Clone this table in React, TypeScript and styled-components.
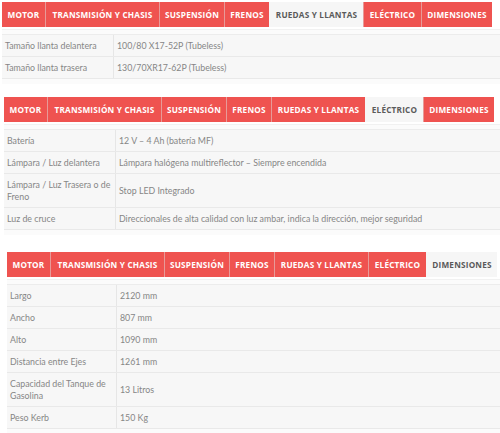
import React from "react";
import styled, { createGlobalStyle } from "styled-components";

const Global = createGlobalStyle`
  html, body { margin: 0; padding: 0; background: #ffffff; overflow: hidden; }
  body { width: 500px; height: 433px; }
`;

const TABS: { label: string; width: number }[] = [
  { label: "MOTOR", width: 43 },
  { label: "TRANSMISIÓN Y CHASIS", width: 114 },
  { label: "SUSPENSIÓN", width: 65 },
  { label: "FRENOS", width: 45 },
  { label: "RUEDAS Y LLANTAS", width: 94 },
  { label: "ELÉCTRICO", width: 58 },
  { label: "DIMENSIONES", width: 71 },
];

type Row = [string, string];

interface SectionData {
  active: number;
  left: number;
  top: number;
  col: number;
  rows: Row[];
}

const SECTIONS: SectionData[] = [
  {
    active: 4,
    left: 2,
    top: 2,
    col: 111,
    rows: [
      ["Tamaño llanta delantera", "100/80 X17-52P (Tubeless)"],
      ["Tamaño llanta trasera", "130/70XR17-62P (Tubeless)"],
    ],
  },
  {
    active: 5,
    left: 4,
    top: 13,
    col: 111,
    rows: [
      ["Batería", "12 V – 4 Ah (batería MF)"],
      ["Lámpara / Luz delantera", "Lámpara halógena multireflector – Siempre encendida"],
      ["Lámpara / Luz Trasera o de Freno", "Stop LED Integrado"],
      ["Luz de cruce", "Direccionales de alta calidad con luz ambar, indica la dirección, mejor seguridad"],
    ],
  },
  {
    active: 6,
    left: 7,
    top: 17,
    col: 109,
    rows: [
      ["Largo", "2120 mm"],
      ["Ancho", "807 mm"],
      ["Alto", "1090 mm"],
      ["Distancia entre Ejes", "1261 mm"],
      ["Capacidad del Tanque de Gasolina", "13 Litros"],
      ["Peso Kerb", "150 Kg"],
    ],
  },
];

const Page = styled.div`
  display: flex;
  flex-direction: column;
  width: 500px;
`;

const Section = styled.section<{ $left: number; $top: number }>`
  display: flex;
  flex-direction: column;
  margin-left: ${(p) => p.$left}px;
  margin-top: ${(p) => p.$top}px;
  width: 540px;
`;

const TabBar = styled.div`
  display: flex;
  height: 25px;
`;

const Tab = styled.div<{ $active: boolean; $w: number }>`
  display: flex;
  align-items: center;
  justify-content: center;
  box-sizing: border-box;
  width: ${(p) => p.$w}px;
  flex: none;
  font-family: "Open Sans", sans-serif;
  font-weight: 700;
  font-size: 8.2px;
  letter-spacing: 0.2px;
  white-space: nowrap;
  color: ${(p) => (p.$active ? "#5a5a5a" : "#ffffff")};
  background: ${(p) => (p.$active ? "#f6f6f6" : "#ef5350")};
  border-left: 1px solid ${(p) => (p.$active ? "#f6f6f6" : "#e79a98")};
  &:first-child { border-left: none; }
`;

const Panel = styled.div`
  margin-top: 2px;
  background: #fbfbfb;
  border-top: 1px solid #f1f1f1;
  padding: 4px 0 5px;
`;

const Table = styled.div`
  display: flex;
  flex-direction: column;
  background: #f7f7f7;
  border-top: 1px solid #ececec;
`;

const TRow = styled.div<{ $col: number }>`
  display: grid;
  grid-template-columns: ${(p) => p.$col}px 1fr;
  border-bottom: 1px solid #e9e9e9;
  min-height: 21px;
`;

const Cell = styled.div`
  display: flex;
  align-items: center;
  padding: 4.5px 3px;
  font-family: "Lato", sans-serif;
  font-size: 8.8px;
  line-height: 12px;
  color: #868686;
  & + & { border-left: 1px solid #e6e6e6; }
`;

export default function App() {
  return (
    <Page>
      <Global />
      {SECTIONS.map((s, si) => (
        <Section key={si} $left={s.left} $top={s.top}>
          <TabBar>
            {TABS.map((t, i) => (
              <Tab key={t.label} $w={t.width} $active={i === s.active}>
                {t.label}
              </Tab>
            ))}
          </TabBar>
          <Panel>
            <Table>
              {s.rows.map(([k, v]) => (
                <TRow key={k} $col={s.col}>
                  <Cell>{k}</Cell>
                  <Cell>{v}</Cell>
                </TRow>
              ))}
            </Table>
          </Panel>
        </Section>
      ))}
    </Page>
  );
}
